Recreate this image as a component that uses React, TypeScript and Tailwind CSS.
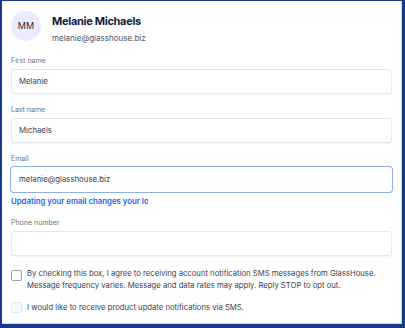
import React from 'react';

const Field = ({
  label,
  value,
  focused = false,
}: {
  label: string;
  value?: string;
  focused?: boolean;
}) => (
  <div className="flex flex-col">
    <label className="text-[7px] leading-[10px] text-[#6b7280] mb-[3px]">{label}</label>
    {focused ? (
      <div className="h-[25px] rounded-[3px] bg-white px-[8px] flex items-center text-[7.8px] text-[#374151] shadow-[0_0_0_1px_#8db0f3]">
        {value}
      </div>
    ) : (
      <div className="h-[25px] rounded-[3px] border border-gray-200 shadow-[0_1px_1px_rgba(0,0,0,0.04)] bg-white px-[7px] flex items-center text-[7.8px] text-[#374151]">
        {value}
      </div>
    )}
  </div>
);

export default function App() {
  return (
    <div
      className="w-[405px] h-[328px] bg-[#16398a] pl-[2px] pt-[1px] pr-[3px] pb-[4px] overflow-hidden"
      style={{ fontFamily: 'Inter, "Noto Sans", sans-serif' }}
    >
      <div className="h-full bg-white border-r border-b border-gray-300 pl-[9px] pr-[9px] pt-[10px] overflow-hidden">
        <div className="flex items-start gap-[11px]">
          <div className="w-[30px] h-[30px] rounded-full bg-[#ede9fe] flex items-center justify-center text-[9px] text-[#1f2937]">
            MM
          </div>
          <div className="flex flex-col pt-[2px]">
            <div className="text-[11px] leading-[16px] font-bold tracking-[-0.3px] text-[#111c3d]">
              Melanie Michaels
            </div>
            <div className="text-[8px] leading-[10px] mt-[4px] text-[#4b5563]">melanie@glasshouse.biz</div>
          </div>
        </div>

        <div className="flex flex-col gap-[11px] mt-[13px]">
          <Field label="First name" value="Melanie" />
          <Field label="Last name" value="Michaels" />
          <div className="flex flex-col">
            <Field label="Email" value="melanie@glasshouse.biz" focused />
            <div className="mt-[4px] w-[137px] overflow-hidden whitespace-nowrap text-[7.8px] leading-[11px] font-semibold text-[#2563eb]">
              Updating your email changes your login
            </div>
          </div>
          <Field label="Phone number" />
        </div>

        <div className="flex items-start gap-[5px] mt-[12px]">
          <div className="w-[11px] h-[11px] mt-[2px] shrink-0 rounded-[2px] border border-gray-400 bg-white" />
          <div className="text-[7.7px] leading-[12px] text-[#374151]">
            By checking this box, I agree to receiving account notification SMS messages from GlassHouse. Message
            frequency varies. Message and data rates may apply. Reply STOP to opt out.
          </div>
        </div>
        <div className="flex items-start gap-[5px] mt-[10px]">
          <div className="w-[11px] h-[11px] shrink-0 rounded-[2px] border border-gray-200 bg-gray-50" />
          <div className="text-[7.7px] leading-[12px] text-[#374151]">
            I would like to receive product update notifications via SMS.
          </div>
        </div>
      </div>
    </div>
  );
}
